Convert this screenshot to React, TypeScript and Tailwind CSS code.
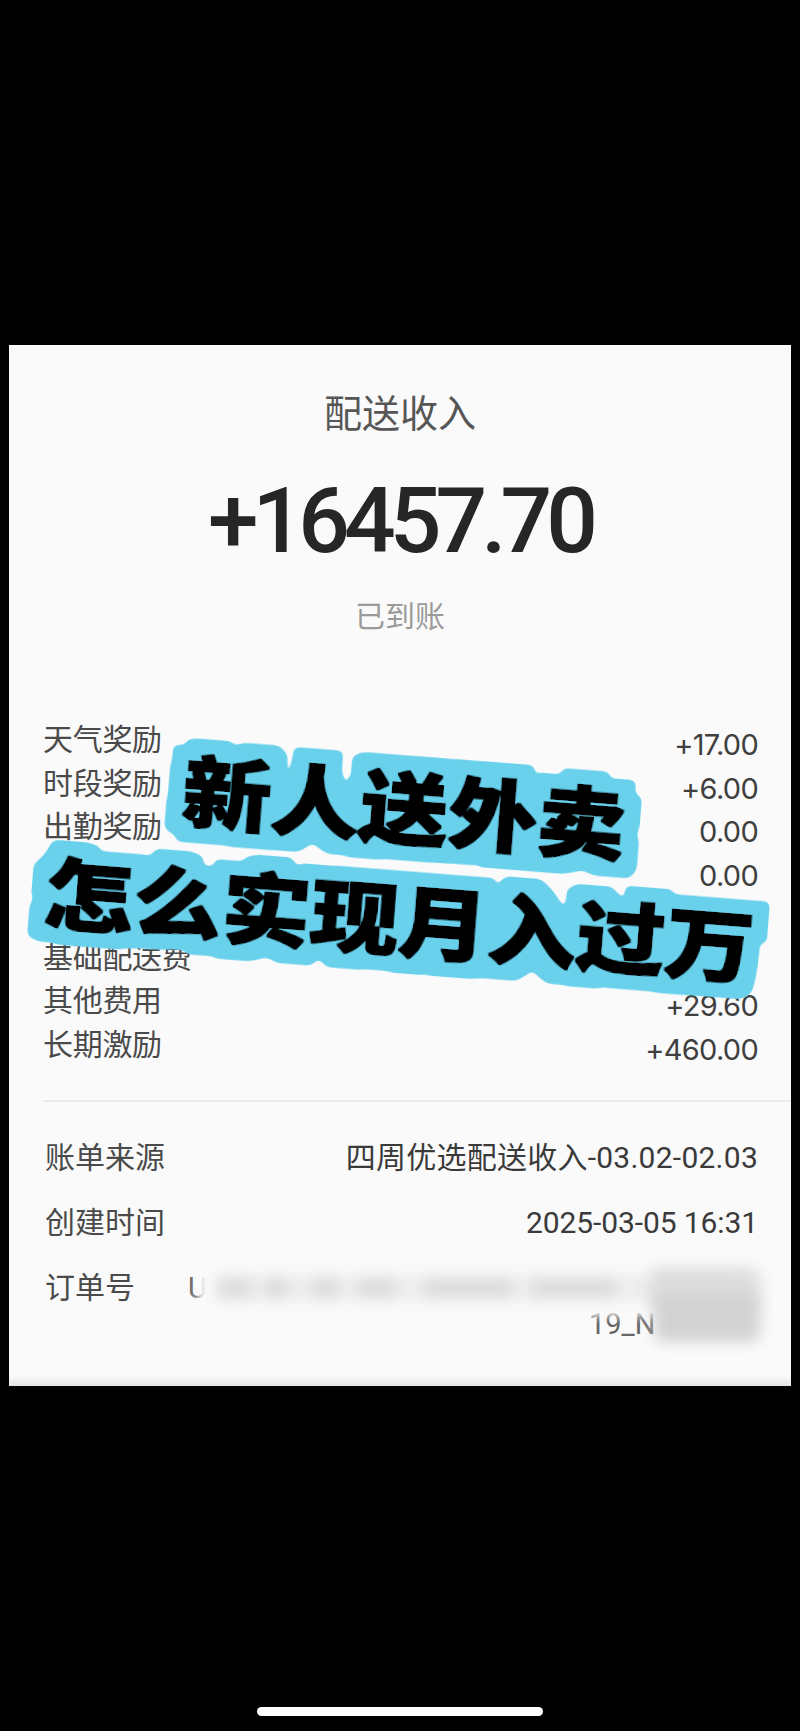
const sans = "font-['Roboto','Noto_Sans_CJK_SC',sans-serif]";
const figures = "font-['Inter','Noto_Sans_CJK_SC',sans-serif]";

const earnings = [
  { label: '天气奖励', value: '+17.00' },
  { label: '时段奖励', value: '+6.00' },
  { label: '出勤奖励', value: '0.00' },
  { label: '冲单奖励', value: '0.00' },
  { label: '高峰奖励', value: '0.00' },
  { label: '基础配送费', value: '+15945.10' },
  { label: '其他费用', value: '+29.60' },
  { label: '长期激励', value: '+460.00' },
];

// Lengths of the smudges over the first line of the order number
const smudges = [
  { width: 'w-[32px]', gap: 'ml-0' },
  { width: 'w-[22px]', gap: 'ml-[15px]' },
  { width: 'w-[26px]', gap: 'ml-[25px]' },
  { width: 'w-[36px]', gap: 'ml-[20px]' },
  { width: 'w-[87px]', gap: 'ml-[30px]' },
  { width: 'w-[82px]', gap: 'ml-[20px]' },
];

function EarningRow({ label, value }: { label: string; value: string }) {
  return (
    <div className="flex h-[43.5px] items-start justify-between">
      <span className="text-[30px] leading-[30px] tracking-[-0.3px] text-[#4a4a4a]">{label}</span>
      <span className={`pt-[5px] text-[29px] leading-[30px] tracking-[-0.7px] text-[#3f3f3f] ${figures}`}>{value}</span>
    </div>
  );
}

function DetailRow({ label, value, spacing }: { label: string; value: string; spacing: string }) {
  return (
    <div className="flex h-[65px] items-start justify-between pl-[2px]">
      <span className="text-[30px] leading-[32px] text-[#4a4a4a]">{label}</span>
      <span className={`text-[30px] leading-[32px] text-[#3a3a3a] ${spacing}`}>{value}</span>
    </div>
  );
}

export default function App() {
  return (
    <div className={`flex h-[1731px] flex-col overflow-hidden bg-black pt-[345px] ${sans}`}>
      {/* Receipt card */}
      <div className="relative mx-[9px] flex h-[1041px] flex-col overflow-hidden bg-[#fafafa] pt-[49px]">
        <div className="text-center text-[38px] leading-[40px] text-[#565656]">配送收入</div>
        <div className="mt-[42px] text-center text-[91px] leading-[90px] font-medium tracking-[-6px] text-[#262626]">+16457.70</div>
        <div className="mt-[35px] text-center text-[30px] leading-[32px] text-[#9a9a9a]">已到账</div>

        <div className="mt-[92px] flex flex-col pr-[33px] pl-[34px]">
          {earnings.map((row) => (
            <EarningRow key={row.label} label={row.label} value={row.value} />
          ))}
        </div>

        <div className="mt-[27px] ml-[34px] h-[2px] bg-[#ebebeb]" />

        <div className="mt-[40px] flex flex-col pr-[33px] pl-[34px]">
          <DetailRow label="账单来源" value="四周优选配送收入-03.02-02.03" spacing="tracking-[0.25px]" />
          <DetailRow label="创建时间" value="2025-03-05 16:31" spacing="tracking-[-0.1px]" />
          <div className="relative flex items-start pl-[2px]">
            <span className="text-[30px] leading-[32px] text-[#4a4a4a]">订单号</span>
            <div className="ml-[53px] flex flex-1 flex-col text-[29px] leading-[32px] text-[#666666]">
              <span>U</span>
              <span className="mt-[4px] ml-[401px]">19_N</span>
            </div>
            {/* Smudged order number */}
            <div className="absolute top-[-12px] right-[-6px] h-[56px] w-[566px] bg-[#fafafa] blur-[5px]" />
            <div className="absolute top-[4px] right-[30px] h-[24px] w-[510px] bg-[#ebebeb] blur-[8px]" />
            <div className="absolute top-[6px] left-[176px] flex h-[20px] items-center">
              {smudges.map((s) => (
                <div key={s.gap + s.width} className={`h-[16px] bg-[#dcdcdc] blur-[6px] ${s.width} ${s.gap}`} />
              ))}
            </div>
            <div className="absolute top-[-4px] right-[-2px] h-[42px] w-[110px] rounded-[10px] bg-[#dddddd] blur-[7px]" />
            <div className="absolute top-[22px] right-[-2px] h-[48px] w-[106px] rounded-[10px] bg-[#d2d2d2] blur-[7px]" />
          </div>
        </div>

        {/* Sheet edge */}
        <div className="absolute inset-x-0 bottom-0 h-[10px] bg-linear-to-b from-transparent to-[#e4e4e4]" />

        {/* Sticker caption, laid out in page coordinates */}
        <svg className="absolute inset-0 h-full w-full" viewBox="9 345 782 1041">
          <defs>
            <filter id="sticker" x="-15%" y="-60%" width="130%" height="220%">
              <feMorphology in="SourceAlpha" operator="dilate" radius="0.8" result="heavy" />
              <feMorphology in="SourceAlpha" operator="dilate" radius="15" />
              <feGaussianBlur stdDeviation="3" />
              <feComponentTransfer result="rim">
                <feFuncA type="linear" slope="10" intercept="-4" />
              </feComponentTransfer>
              <feFlood floodColor="#6bd1ed" />
              <feComposite in2="rim" operator="in" result="cyan" />
              <feMerge>
                <feMergeNode in="cyan" />
                <feMergeNode in="heavy" />
              </feMerge>
            </filter>
          </defs>
          <g fill="#000000" fontWeight="900" textAnchor="middle" fontSize="78">
            <text filter="url(#sticker)" transform="translate(402 838) rotate(4.5) scale(1.14 1)">新人送外卖</text>
            <text filter="url(#sticker)" transform="translate(397 950) rotate(4.5) scale(1.14 1)">怎么实现月入过万</text>
          </g>
        </svg>
      </div>

      {/* Home indicator */}
      <div className="mx-auto mt-[321px] h-[9px] w-[286px] rounded-full bg-white" />
    </div>
  );
}
